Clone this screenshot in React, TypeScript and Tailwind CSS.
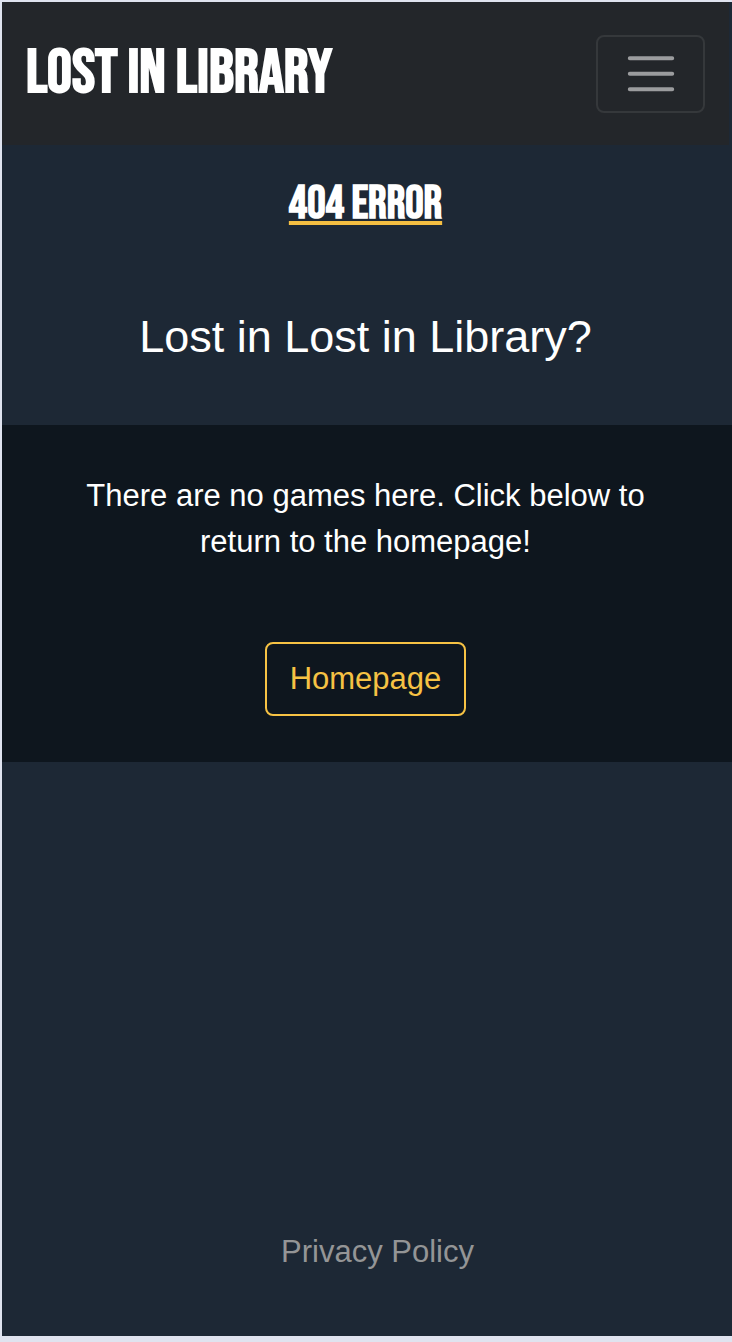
export default function App() {
  return (
    <div className="flex min-h-screen flex-col border-t-2 border-b-6 border-l-2 border-[#dfe3ef] bg-[#1d2835] font-['Liberation_Sans',Arial,sans-serif] text-[31px] leading-[46px] text-white">
      <header className="mr-[3px] flex items-start justify-between bg-[#23262a] pt-[33px] pr-6 pb-8 pl-6">
        <a
          href="/"
          className="mt-1 font-['Bebas_Neue','Liberation_Sans_Narrow','Liberation_Sans',sans-serif] text-[62px] leading-[70px] font-bold whitespace-nowrap"
        >
          LOST IN LIBRARY
        </a>
        <button
          type="button"
          aria-label="Toggle navigation"
          className="flex h-[78px] w-[109px] items-center justify-center rounded-lg border-2 border-[#35383b]"
        >
          <svg width="58" height="58" viewBox="0 0 58 58" fill="none" aria-hidden="true">
            <path
              d="M7.8 13.2h42.4M7.8 28.7h42.4M7.8 44.2h42.4"
              stroke="#9b9c9e"
              strokeWidth="4"
              strokeLinecap="round"
            />
          </svg>
        </button>
      </header>

      <main className="flex flex-col text-center">
        <h1 className="mt-9 pr-[3px] font-['Bebas_Neue','Liberation_Sans_Narrow','Liberation_Sans',sans-serif] text-[46px] leading-[48px] font-bold">
          <span className="underline decoration-[#f5bf42] decoration-4 underline-offset-3">
            404 ERROR
          </span>
        </h1>
        <h2 className="mt-[81px] pr-[3px] text-[45px] leading-[54px]">Lost in Lost in Library?</h2>
        <section className="mt-[61px] flex flex-col items-center bg-[#0e161e] pt-12 pr-[3px] pb-[46px]">
          <p className="max-w-[600px]">There are no games here. Click below to return to the homepage!</p>
          <a
            href="/"
            className="mt-[77px] rounded-lg border-2 border-[#f6c244] px-[23px] py-3 text-[#f6c244]"
          >
            Homepage
          </a>
        </section>
      </main>

      <footer className="mt-auto pr-[3px] pb-[61px] pl-6 text-center">
        <a href="/privacy" className="text-[#949596]">
          Privacy Policy
        </a>
      </footer>
    </div>
  );
}
